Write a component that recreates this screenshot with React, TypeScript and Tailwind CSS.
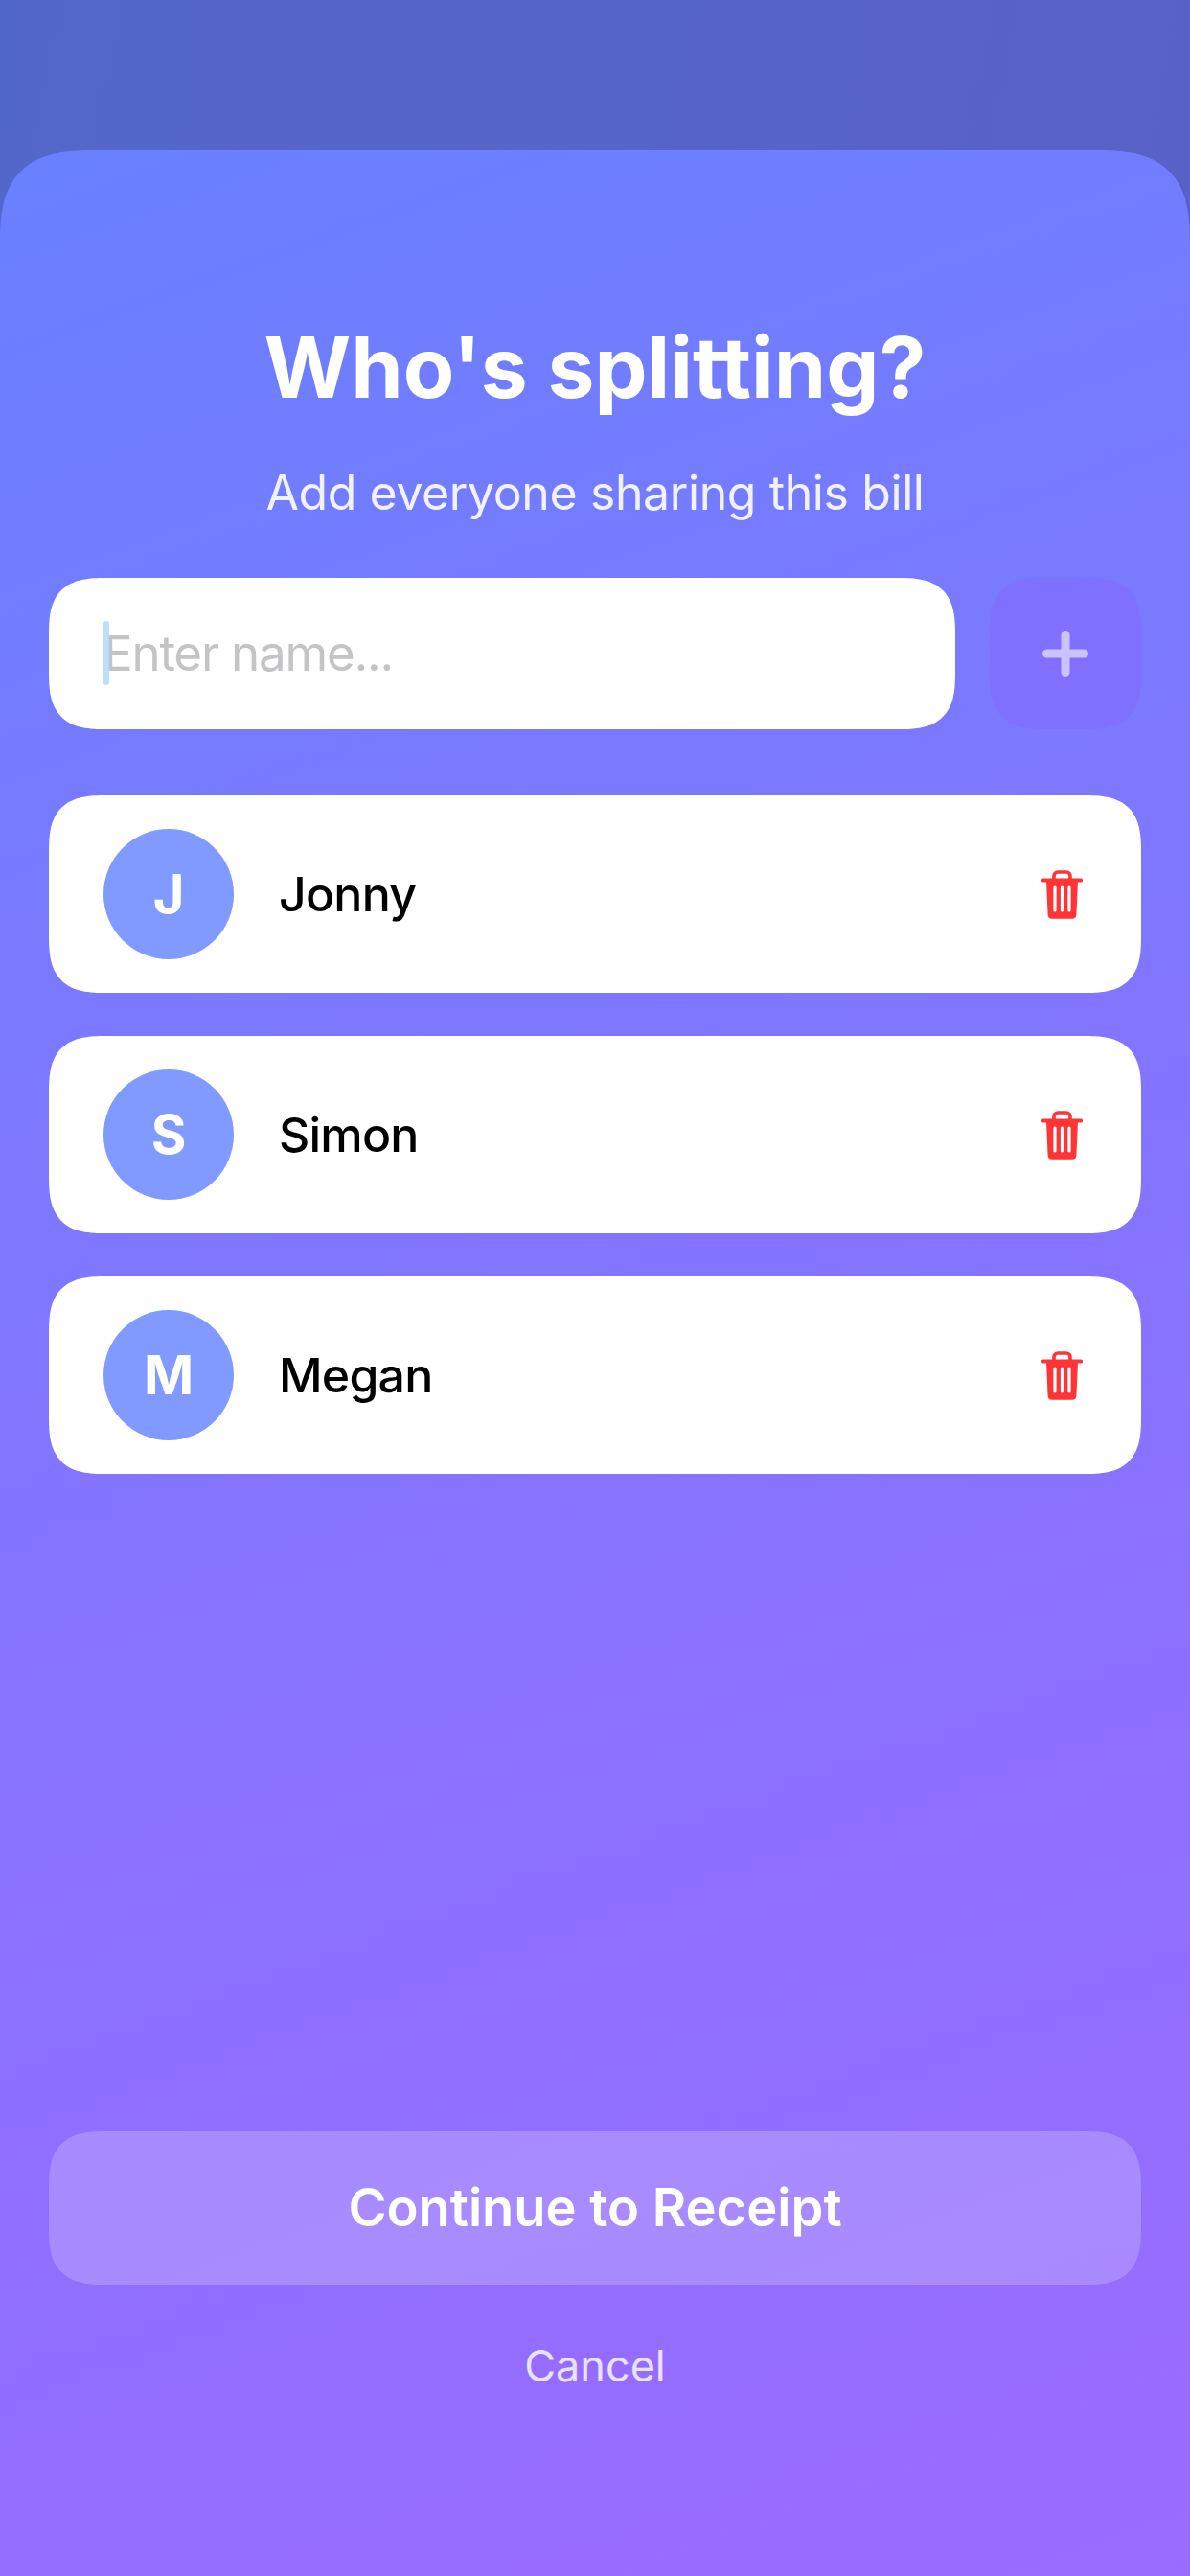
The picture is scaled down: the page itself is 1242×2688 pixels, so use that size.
function TrashIcon() {
  return (
    <svg viewBox="0 0 43 51" className="w-[43px] h-[51px]" aria-hidden="true">
      <path d="M13 9V6a4 4 0 0 1 4-4h9a4 4 0 0 1 4 4v3" fill="none" stroke="#ff3437" strokeWidth="3.6" />
      <rect x="0" y="8.5" width="43" height="4" rx="1.6" fill="#ff3437" />
      <path d="M5 11h33l-1.6 35.5a4.4 4.4 0 0 1-4.4 4.2H11a4.4 4.4 0 0 1-4.4-4.2z" fill="#ff3437" />
      <rect x="12.4" y="16.5" width="3.2" height="27" rx="1.6" fill="#fff" />
      <rect x="19.9" y="16.5" width="3.2" height="27" rx="1.6" fill="#fff" />
      <rect x="27.4" y="16.5" width="3.2" height="27" rx="1.6" fill="#fff" />
    </svg>
  );
}

function PersonRow({ name }: { name: string }) {
  return (
    <div className="h-[206px] rounded-[60px] [corner-shape:superellipse(1.5)] bg-white flex items-center pl-[57px] pr-[61px]">
      <div className="w-[136px] h-[136px] rounded-full bg-[#819aff] flex items-center justify-center text-white text-[56px] font-bold">
        {name[0]}
      </div>
      <div className="ml-[47px] text-black text-[50px] font-medium tracking-[-0.8px]">{name}</div>
      <button className="ml-auto flex" aria-label={`Remove ${name}`}>
        <TrashIcon />
      </button>
    </div>
  );
}

export default function App() {
  const people = ["Jonny", "Simon", "Megan"];

  return (
    <div className="w-[1242px] h-[2688px] pt-[157px] flex flex-col overflow-hidden font-['Inter',sans-serif] bg-[linear-gradient(100deg,#5268c9,#5b5fc6)]">
      <div className="flex-1 flex flex-col rounded-t-[100px] [corner-shape:superellipse(1.5)] px-[51px] bg-[linear-gradient(160deg,#6880ff_0%,#7d78ff_35%,#8f6fff_72%,#9a6bff_100%)]">
        <h1 className="mt-[172px] text-center text-white text-[87.5px] leading-[108px] font-bold">Who's splitting?</h1>
        <p className="mt-[45px] text-center text-white/90 text-[50px] leading-[64px] tracking-[-0.4px]">Add everyone sharing this bill</p>

        <div className="mt-[57px] flex gap-[36px]">
          <div className="relative flex-1 h-[158px]">
            <input
              className="w-full h-full rounded-[60px] [corner-shape:superellipse(1.5)] bg-white pl-[57px] pb-[2px] pr-[40px] text-[51px] tracking-[-1.2px] outline-none caret-transparent placeholder:text-[#c4c4c6]"
              placeholder="Enter name..."
            />
            <span className="absolute left-[57px] top-[45px] w-[6px] h-[67px] rounded-full bg-[#b5dcff] opacity-90" />
          </div>
          <button className="w-[158px] h-[158px] rounded-[60px] [corner-shape:superellipse(1.5)] bg-[#7f70ff] flex items-center justify-center" aria-label="Add person">
            <svg viewBox="0 0 50 50" className="w-[50px] h-[50px]" aria-hidden="true">
              <path d="M25 5.5v39M5.5 25h39" stroke="#c9c3ff" strokeWidth="9" strokeLinecap="round" />
            </svg>
          </button>
        </div>

        <div className="mt-[69px] flex flex-col gap-[45px]">
          {people.map((p) => (
            <PersonRow key={p} name={p} />
          ))}
        </div>

        <button className="mt-auto h-[160px] rounded-[60px] [corner-shape:superellipse(1.5)] bg-white/20 text-white text-[54.3px] font-semibold">Continue to Receipt</button>
        <button className="mt-[57px] mb-[191px] text-white/80 text-[45px] leading-[56px]">Cancel</button>
      </div>
    </div>
  );
}
